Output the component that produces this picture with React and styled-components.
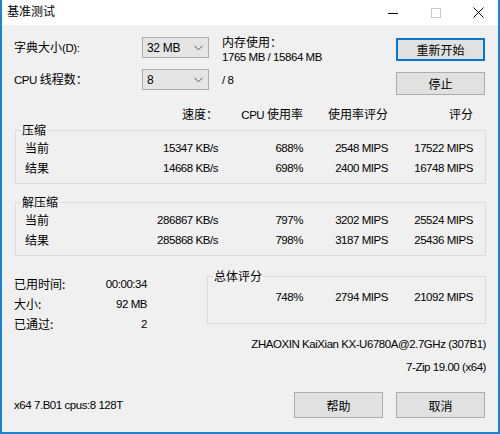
import React from "react";
import styled, { createGlobalStyle } from "styled-components";

const Global = createGlobalStyle`
  html, body { margin: 0; padding: 0; background: #fff; }
  body { font-family: "Liberation Sans", "Noto Sans CJK SC", sans-serif; font-size: 11.5px; color: #000; letter-spacing: -0.45px; }
  * { box-sizing: border-box; }
`;

const Zh = styled.span`
  font-family: "Noto Sans CJK SC", sans-serif;
  font-size: 12px;
  letter-spacing: 0;
`;

const Window = styled.div`
  width: 500px;
  height: 434px;
  display: flex;
  flex-direction: column;
  background: #f0f0f0;
  border: 2px solid #1883d7;
  border-top: none;
  overflow: hidden;
`;

const TitleBar = styled.div`
  height: 25px;
  flex: none;
  display: flex;
  align-items: center;
  background: #fff;
  margin: 0 -2px;
  padding-left: 7px;
`;

const Title = styled.div`
  flex: 1;
  line-height: 16px;
  margin-top: -2px;
`;

const Ctrl = styled.div`
  width: 43px;
  height: 25px;
  display: flex;
  align-items: center;
  justify-content: center;
`;

const Content = styled.div`
  flex: 1;
  display: flex;
  flex-direction: column;
  padding: 0 12px 0 12px;
`;

const Top = styled.div`
  display: flex;
  padding-top: 12px;
`;

const TopGrid = styled.div`
  display: grid;
  grid-template-columns: 128px 67px 1fr;
  grid-template-rows: 21px 21px;
  row-gap: 11px;
  flex: 1;
  align-items: center;
`;

const Label = styled.div`
  line-height: 16px;
  white-space: nowrap;
`;

const Select = styled.div`
  height: 21px;
  border: 1px solid #acacac;
  background: #e5e5e5;
  display: flex;
  align-items: center;
  justify-content: space-between;
  padding: 0 5px 0 4px;
  line-height: 16px;
  font-size: 12px;
  letter-spacing: -0.3px;
`;

const MemInfo = styled.div`
  line-height: 14px;
  align-self: start;
  margin: -2px 0 0 13px;
`;

const Side = styled.div`
  line-height: 16px;
  margin-left: 13px;
`;

const ButtonCol = styled.div`
  display: flex;
  flex-direction: column;
  gap: 11px;
  padding-top: 1px;
  width: 89px;
  margin-right: 1px;
`;

const Button = styled.div`
  height: ${(p) => (p.$tall ? 26 : 23)}px;
  width: 89px;
  background: #e1e1e1;
  border: ${(p) => (p.$default ? "2px solid #0078d7" : "1px solid #adadad")};
  display: flex;
  align-items: center;
  justify-content: center;
  font-family: "Noto Sans CJK SC", sans-serif;
  font-size: 12px;
  letter-spacing: 0;
`;

const Grid = styled.div`
  display: grid;
  grid-template-columns: ${(p) => p.$first}px 85px 85px 85px 85px;
  height: ${(p) => p.$h || 20}px;
  align-items: center;
  line-height: 16px;
`;

const Cell = styled.div`
  text-align: ${(p) => (p.$left ? "left" : "right")};
  padding-left: ${(p) => p.$pl || 0}px;
  white-space: nowrap;
`;

const HeaderRow = styled(Grid)`
  margin-top: 11px;
  margin-left: 1px;
`;

const Group = styled.fieldset`
  margin: ${(p) => p.$mt}px 0 0 1px;
  padding: 0 0 5px 0;
  border: 1px solid #dcdcdc;
  min-width: 0;
`;

const Legend = styled.legend`
  padding: 0 1px;
  margin-left: 5px;
  line-height: 16px;
  font-family: "Noto Sans CJK SC", sans-serif;
  font-size: 12px;
  letter-spacing: 0;
`;

const Bottom = styled.div`
  display: flex;
  margin-top: 18px;
`;

const Stats = styled.div`
  width: 133px;
  display: grid;
  grid-template-columns: 1fr auto;
  grid-auto-rows: 20px;
  align-items: center;
  line-height: 16px;
`;

const Overall = styled.fieldset`
  margin: -6px 0 0 60px;
  padding: 0 0 5px 0;
  border: 1px solid #dcdcdc;
  flex: 1;
  height: 56px;
  min-width: 0;
`;

const OverallGrid = styled.div`
  display: grid;
  grid-template-columns: 95px 85px 85px;
  height: 20px;
  margin-top: 3px;
  align-items: center;
  line-height: 16px;
`;

const InfoLine = styled.div`
  text-align: right;
  line-height: 16px;
  margin-top: ${(p) => p.$mt}px;
`;

const Footer = styled.div`
  display: flex;
  align-items: center;
  margin-top: 17px;
`;

const FooterText = styled.div`
  flex: 1;
  line-height: 16px;
`;

const FooterButtons = styled.div`
  display: flex;
  gap: 13px;
  margin-right: 1px;
`;

const Chevron = () => (
  <svg width="9" height="6" viewBox="0 0 9 6">
    <path d="M0.5 0.8 L4.5 4.8 L8.5 0.8" fill="none" stroke="#555" strokeWidth="1" />
  </svg>
);

const rows1 = [
  ["当前", "15347 KB/s", "688%", "2548 MIPS", "17522 MIPS"],
  ["结果", "14668 KB/s", "698%", "2400 MIPS", "16748 MIPS"],
];
const rows2 = [
  ["当前", "286867 KB/s", "797%", "3202 MIPS", "25524 MIPS"],
  ["结果", "285868 KB/s", "798%", "3187 MIPS", "25436 MIPS"],
];

const DataRow = ({ r }) => (
  <Grid $first={117}>
    <Cell $left $pl={9}><Zh>{r[0]}</Zh></Cell>
    <Cell>{r[1]}</Cell>
    <Cell>{r[2]}</Cell>
    <Cell>{r[3]}</Cell>
    <Cell>{r[4]}</Cell>
  </Grid>
);

export default function App() {
  return (
    <>
      <Global />
      <Window>
        <TitleBar>
          <Title><Zh>基准测试</Zh></Title>
          <Ctrl>
            <svg width="10" height="10" viewBox="0 0 10 10">
              <path d="M0 5.5 H10" stroke="#000" strokeWidth="1" />
            </svg>
          </Ctrl>
          <Ctrl>
            <svg width="10" height="10" viewBox="0 0 10 10">
              <rect x="0.5" y="0.5" width="9" height="9" fill="none" stroke="#c8c8c8" strokeWidth="1" />
            </svg>
          </Ctrl>
          <Ctrl>
            <svg width="11" height="11" viewBox="0 0 11 11">
              <path d="M0.5 0.5 L10.5 10.5 M10.5 0.5 L0.5 10.5" stroke="#000" strokeWidth="1" />
            </svg>
          </Ctrl>
        </TitleBar>
        <Content>
          <Top>
            <TopGrid>
              <Label><Zh>字典大小</Zh>(D):</Label>
              <Select>
                <span>32 MB</span>
                <Chevron />
              </Select>
              <MemInfo>
                <Zh>内存使用：</Zh>
                <br />
                1765 MB / 15864 MB
              </MemInfo>
              <Label>CPU <Zh>线程数：</Zh></Label>
              <Select>
                <span>8</span>
                <Chevron />
              </Select>
              <Side>/ 8</Side>
            </TopGrid>
            <ButtonCol>
              <Button $default>重新开始</Button>
              <Button>停止</Button>
            </ButtonCol>
          </Top>
          <HeaderRow $first={118} $h={16}>
            <Cell />
            <Cell><Zh>速度：</Zh></Cell>
            <Cell>CPU <Zh>使用率</Zh></Cell>
            <Cell><Zh>使用率评分</Zh></Cell>
            <Cell><Zh>评分</Zh></Cell>
          </HeaderRow>
          <Group $mt={0}>
            <Legend>压缩</Legend>
            {rows1.map((r) => (
              <DataRow key={r[0]} r={r} />
            ))}
          </Group>
          <Group $mt={10}>
            <Legend>解压缩</Legend>
            {rows2.map((r) => (
              <DataRow key={r[0]} r={r} />
            ))}
          </Group>
          <Bottom>
            <Stats>
              <Label><Zh>已用时间:</Zh></Label>
              <Cell>00:00:34</Cell>
              <Label><Zh>大小:</Zh></Label>
              <Cell>92 MB</Cell>
              <Label><Zh>已通过:</Zh></Label>
              <Cell>2</Cell>
            </Stats>
            <Overall>
              <Legend>总体评分</Legend>
              <OverallGrid>
                <Cell>748%</Cell>
                <Cell>2794 MIPS</Cell>
                <Cell>21092 MIPS</Cell>
              </OverallGrid>
            </Overall>
          </Bottom>
          <InfoLine $mt={2}>ZHAOXIN KaiXian KX-U6780A@2.7GHz (307B1)</InfoLine>
          <InfoLine $mt={7}>7-Zip 19.00 (x64)</InfoLine>
          <Footer>
            <FooterText>x64 7.B01 cpus:8 128T</FooterText>
            <FooterButtons>
              <Button $tall>帮助</Button>
              <Button $tall>取消</Button>
            </FooterButtons>
          </Footer>
        </Content>
      </Window>
    </>
  );
}
